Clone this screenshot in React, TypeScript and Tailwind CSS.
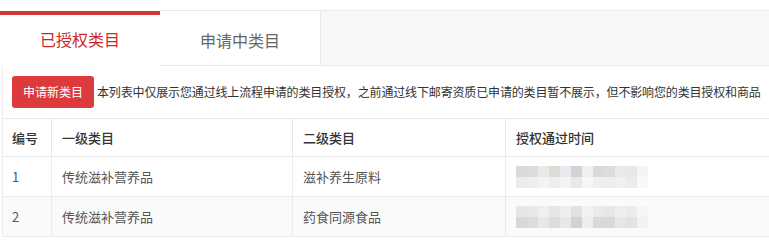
import React from "react";

const mosaic1 = [
  ["#dadada", "#dcdcdc", "#e9e9e9", "#dedad6", "#e7ebef", "#d3d3d3", "#efefef", "#dcdad8", "#dcdcdc", "#e7e9eb", "#e8e8e8", "#f4f4f4"],
  ["#ebebeb", "#eeeeee", "#f3f3f3", "#eeeeee", "#f1f3f5", "#e9e9e9", "#f6f6f6", "#efefef", "#eeeeee", "#f0f0f0", "#ececec", "#f8f8f8"],
];
const mosaic2 = [
  ["#e6e6e6", "#e8e8e8", "#efefef", "#e6e6e6", "#eceef0", "#e2e2e2", "#f2f2f2", "#eaeaea", "#e6e6e6", "#eeeeee", "#ebebeb", "#f6f6f6"],
  ["#d8d8d8", "#dcdcdc", "#e8e8e8", "#dddddd", "#e6e9ec", "#d2d2d2", "#eeeeee", "#d9d9d9", "#d9d9d9", "#e4e6e8", "#e3e3e3", "#f2f2f2"],
];

function Mosaic({ data }: { data: string[][] }) {
  return (
    <svg width="133" height="22" viewBox="0 0 133 22">
      {data.map((row, r) =>
        row.map((c, i) => (
          <rect key={r + "-" + i} x={i * 11} y={r * 11} width="11" height="11" fill={c} />
        ))
      )}
    </svg>
  );
}

const rows = [
  { id: "1", a: "传统滋补营养品", b: "滋补养生原料", m: mosaic1 },
  { id: "2", a: "传统滋补营养品", b: "药食同源食品", m: mosaic2 },
];

export default function App() {
  return (
    <div
      className="w-[769px] h-[247px] bg-white overflow-hidden pt-[10px]"
      style={{ fontFamily: '"Microsoft YaHei", "Noto Sans CJK SC", "Noto Sans", sans-serif' }}
    >
      {/* tabs */}
      <div className="flex h-[56px]">
        <div className="w-[160px] bg-white flex flex-col">
          <div className="mt-px h-[4px] bg-[#d5363a]" />
          <div className="flex-1 flex items-center justify-center text-[16px] text-[#c8282c] pb-[4px]">
            已授权类目
          </div>
        </div>
        <div className="w-[161px] bg-white border-t border-r border-b border-[#e8e8e8] flex items-center justify-center text-[16px] text-[#666] pt-[3px]">
          申请中类目
        </div>
        <div className="flex-1 bg-[#f7f7f7] border-t border-b border-[#ececec]" />
      </div>

      {/* content */}
      <div className="ml-[2px] border-l border-[#ececec]">
        <div className="h-[53px] flex items-center pl-[9px] border-b border-[#e8e8e8] whitespace-nowrap overflow-hidden">
          <div className="w-[82px] h-[32px] shrink-0 rounded-[3px] bg-[#dc3a3c] text-white text-[12px] flex items-center justify-center">
            申请新类目
          </div>
          <div className="ml-[3px] text-[12px] text-[#333] tracking-[-0.15px]">
            本列表中仅展示您通过线上流程申请的类目授权，之前通过线下邮寄资质已申请的类目暂不展示，但不影响您的类目授权和商品
          </div>
        </div>

        <div className="grid grid-cols-[49px_241px_213px_1fr] text-[13px]">
          <div className="h-[38px] border-r border-b border-[#e8e8e8] pl-[9px] flex items-center text-[#333] font-medium">编号</div>
          <div className="h-[38px] border-r border-b border-[#e8e8e8] pl-[10px] flex items-center text-[#333] font-medium">一级类目</div>
          <div className="h-[38px] border-r border-b border-[#e8e8e8] pl-[10px] flex items-center text-[#333] font-medium">二级类目</div>
          <div className="h-[38px] border-b border-[#e8e8e8] pl-[10px] flex items-center text-[#333] font-medium">授权通过时间</div>
          {rows.map((r, idx) => {
            const bg = idx % 2 === 1 ? "bg-[#fafafa]" : "bg-white";
            return (
              <React.Fragment key={r.id}>
                <div className={`h-[40px] border-r border-b border-[#ececec] pl-[9px] flex items-center text-[#555] ${bg}`}>{r.id}</div>
                <div className={`h-[40px] border-r border-b border-[#ececec] pl-[10px] flex items-center text-[#555] ${bg}`}>{r.a}</div>
                <div className={`h-[40px] border-r border-b border-[#ececec] pl-[10px] flex items-center text-[#555] ${bg}`}>{r.b}</div>
                <div className={`h-[40px] border-b border-[#ececec] pl-[10px] flex items-center ${bg}`}>
                  <Mosaic data={r.m} />
                </div>
              </React.Fragment>
            );
          })}
        </div>
      </div>
    </div>
  );
}
